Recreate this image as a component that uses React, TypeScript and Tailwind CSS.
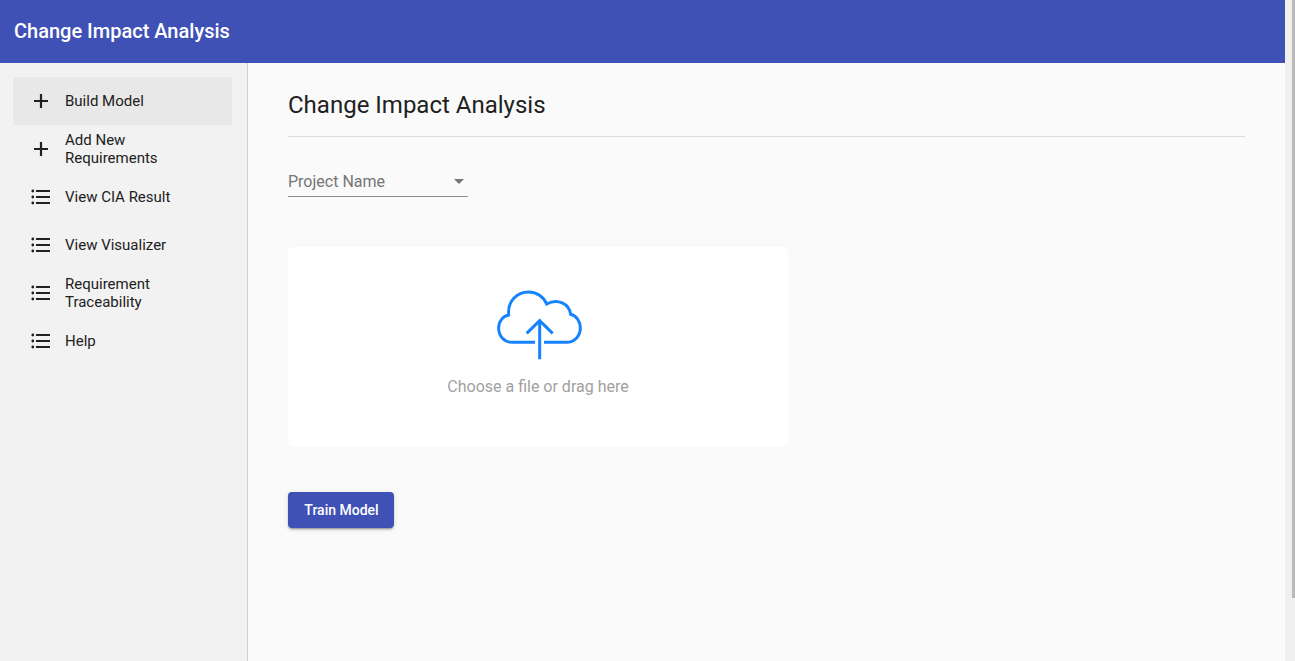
function AddIcon() {
  return (
    <svg className="size-6 shrink-0" viewBox="0 0 24 24" fill="currentColor">
      <path d="M19 13H13.100V19H10.900V13H5V11H10.900V5H13.100V11H19Z" />
    </svg>
  );
}

function ListIcon() {
  return (
    <svg className="size-6 shrink-0" viewBox="0 0 24 24" fill="currentColor">
      <circle cx="3.800" cy="6" r="1.400" />
      <circle cx="3.800" cy="12" r="1.400" />
      <circle cx="3.800" cy="18" r="1.400" />
      <path d="M7 5H21V7H7ZM7 11H21V13H7ZM7 17H21V19H7Z" />
    </svg>
  );
}

const navItems = [
  { label: "Build Model", icon: AddIcon, active: true },
  { label: "Add New Requirements", icon: AddIcon },
  { label: "View CIA Result", icon: ListIcon },
  { label: "View Visualizer", icon: ListIcon },
  { label: "Requirement Traceability", icon: ListIcon },
  { label: "Help", icon: ListIcon },
];

function Sidebar() {
  return (
    <nav className="w-[248px] shrink-0 border-r border-[#cfcfcf] bg-[#f2f2f2] pt-3.5 pr-[15px] pl-[13px]">
      {navItems.map(({ label, icon: Icon, active }) => (
        <a
          key={label}
          className={`flex h-12 items-center gap-3 px-4 text-[15px] leading-[18px] text-[#212121] ${active ? "bg-[#e8e8e8]" : ""}`}
        >
          <Icon />
          <span className="w-[110px]">{label}</span>
        </a>
      ))}
    </nav>
  );
}

function CloudUpload() {
  return (
    <svg
      className="ml-[2px] h-[74px] w-[88px]"
      viewBox="0 0 264 222"
      fill="none"
      stroke="#1682fd"
      strokeWidth="9"
    >
      <path d="M120 166H51C28 166 11 148 11 124C11 103 23 88 41 84C37 42 66 15 101 15C125 15 146 29 155 51C187 33 223 49 227 82C244 86 256 103 256 123C256 147 238 166 215 166H147" />
      <path d="M134 217V101M95 139L134 101L173 139" />
    </svg>
  );
}

export default function App() {
  return (
    <div className="flex h-screen overflow-hidden bg-[#fafafa] font-['Roboto',sans-serif] text-[#212121]">
      <div className="flex min-w-0 flex-1 flex-col">
        <header className="flex h-[63px] shrink-0 items-center bg-[#3f51b5] pb-px pl-3.5 text-xl font-medium text-white">
          Change Impact Analysis
        </header>
        <div className="flex min-h-0 flex-1">
          <Sidebar />
          <main className="min-w-0 flex-1 px-10 pt-[26px]">
            <h1 className="h-[48px] border-b border-[#dadada] text-2xl leading-8">Change Impact Analysis</h1>
            <div className="mt-[29px] flex h-[31px] w-[180px] items-center justify-between border-b border-[#8f8f8f] pr-1 text-base text-[#757575]">
              <span className="pt-0.5">Project Name</span>
              <svg className="h-[5px] w-2.5" viewBox="0 0 10 5" fill="currentColor">
                <path d="M0 0H10L5 5Z" />
              </svg>
            </div>
            <div className="mt-[50px] flex h-[200px] w-[500px] flex-col items-center rounded-md bg-white pt-10">
              <CloudUpload />
              <p className="mt-3.5 text-base leading-6 text-[#a1a1a1]">Choose a file or drag here</p>
            </div>
            <button className="mt-[45px] h-9 w-[106px] rounded bg-[#3f51b5] pl-px text-sm font-medium text-white shadow-[0_3px_1px_-2px_rgba(0,0,0,0.2),0_2px_2px_0_rgba(0,0,0,0.14),0_1px_5px_0_rgba(0,0,0,0.12)]">
              Train Model
            </button>
          </main>
        </div>
      </div>
      <div className="flex w-2.5 shrink-0 justify-end bg-[#f1f0ef]">
        <div className="h-[598px] w-[3px] bg-[#bababa]" />
      </div>
    </div>
  );
}
